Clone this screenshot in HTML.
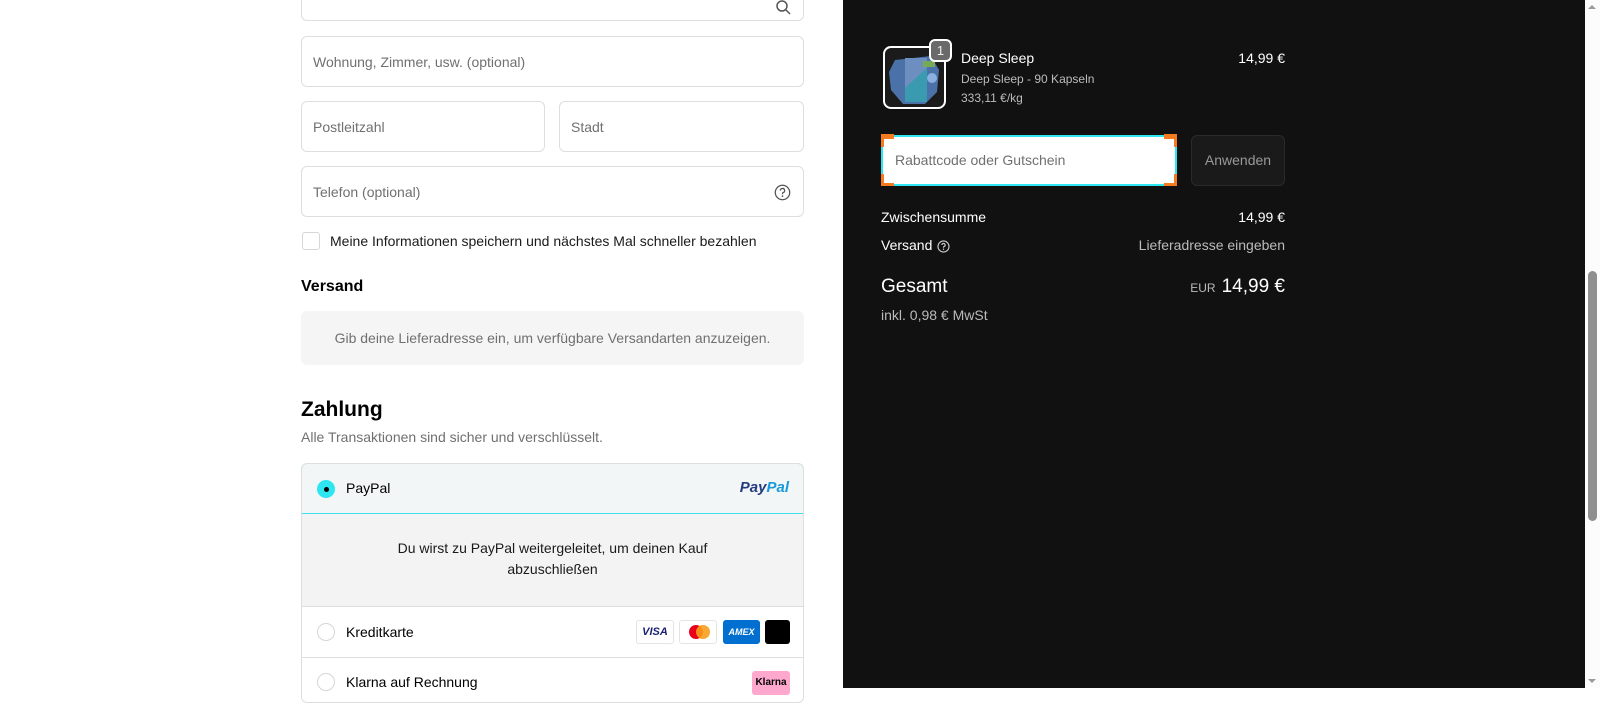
<!DOCTYPE html>
<html><head><meta charset="utf-8"><style>
*{box-sizing:border-box;margin:0;padding:0}
body{width:1600px;height:688px;overflow:hidden;position:relative;background:#fff;font-family:"Liberation Sans",sans-serif;font-size:14px;color:#000}
.a{position:absolute}
.f{position:absolute;border:1px solid #dedede;border-radius:6px;background:#fff;color:#707070;padding-left:11px;display:flex;align-items:center;font-size:14px;overflow:hidden}
.dark{position:absolute;left:843px;top:0;width:742px;height:688px;background:#111;color:#fff}
</style></head><body>
<div class="f" style="left:301px;top:-34px;width:503px;height:55px;"><span style="position:relative;top:-3px">Adresse</span>
<svg class="a" style="right:12px;top:32px" width="16" height="16" viewBox="0 0 16 16"><circle cx="7" cy="7" r="5" fill="none" stroke="#555" stroke-width="1.5"/><path d="M11 11l4 4" stroke="#555" stroke-width="1.5"/></svg></div>
<div class="f" style="left:301px;top:36px;width:503px;height:51px;">Wohnung, Zimmer, usw. (optional)</div>
<div class="f" style="left:301px;top:101px;width:244px;height:51px;">Postleitzahl</div>
<div class="f" style="left:559px;top:101px;width:245px;height:51px;">Stadt</div>
<div class="f" style="left:301px;top:166px;width:503px;height:51px;">Telefon (optional)
<svg class="a" style="right:12px;top:17px" width="17" height="17" viewBox="0 0 16 16"><circle cx="8" cy="8" r="6.8" fill="none" stroke="#555" stroke-width="1.2"/><path d="M6 6.2a2 2 0 1 1 2.6 1.9c-.5.2-.6.5-.6 1v.5" fill="none" stroke="#555" stroke-width="1.2"/><circle cx="8" cy="11.4" r=".8" fill="#555"/></svg></div>
<div class="a" style="left:302px;top:232px;width:18px;height:18px;border:1px solid #d6d6d6;border-radius:3px"></div>
<div class="a" style="left:330px;top:233px;font-size:14px;color:#1a1a1a">Meine Informationen speichern und nächstes Mal schneller bezahlen</div>
<div class="a" style="left:301px;top:278px;font-size:16px;font-weight:bold">Versand</div>
<div class="a" style="left:301px;top:311px;width:503px;height:54px;background:#f5f5f5;border-radius:6px;color:#707070;font-size:14px;text-align:center;line-height:54px">Gib deine Lieferadresse ein, um verfügbare Versandarten anzuzeigen.</div>
<div class="a" style="left:301px;top:398px;font-size:21px;font-weight:bold">Zahlung</div>
<div class="a" style="left:301px;top:429px;font-size:14px;color:#707070">Alle Transaktionen sind sicher und verschlüsselt.</div>
<div class="a" style="left:301px;top:463px;width:503px;height:240px;border:1px solid #dedede;border-radius:6px;overflow:hidden">
 <div class="a" style="left:-1px;top:-1px;width:503px;height:51px;border:1px solid #3fdfef;border-radius:6px 6px 0 0;background:#f3f6f7"></div>
 <div class="a" style="left:15px;top:16px;width:18px;height:18px;border-radius:50%;background:#2ee6f2"></div>
 <div class="a" style="left:21.5px;top:22.5px;width:5px;height:5px;border-radius:50%;background:#000"></div>
 <div class="a" style="left:44px;top:16px;font-size:14px">PayPal</div>
 <div class="a" style="right:14px;top:15px;font-size:15px;font-weight:bold;font-style:italic;color:#253b80">Pay<span style="color:#179bd7">Pal</span></div>
 <div class="a" style="left:0;top:50px;width:501px;height:93px;background:#f3f3f3;border-bottom:1px solid #dedede;text-align:center;font-size:14px;line-height:21px;padding-top:24px;color:#1a1a1a">Du wirst zu PayPal weitergeleitet, um deinen Kauf<br>abzuschließen</div>
 <div class="a" style="left:15px;top:159px;width:18px;height:18px;border-radius:50%;border:1px solid #d6d6d6"></div>
 <div class="a" style="left:44px;top:160px;font-size:14px">Kreditkarte</div>
 <div class="a" style="left:334px;top:156px;width:38px;height:24px;border:1px solid #e4e4e4;border-radius:3px;text-align:center;font:italic bold 11px/22px 'Liberation Sans',sans-serif;color:#1a1f71">VISA</div>
 <div class="a" style="left:377px;top:156px;width:38px;height:24px;border:1px solid #e4e4e4;border-radius:3px"><div class="a" style="left:9px;top:4px;width:14px;height:14px;border-radius:50%;background:#eb001b"></div><div class="a" style="left:16px;top:4px;width:14px;height:14px;border-radius:50%;background:#f79e1b;opacity:.9"></div></div>
 <div class="a" style="left:421px;top:156px;width:37px;height:24px;background:#016fd0;border-radius:3px;text-align:center;font:italic bold 9px/24px 'Liberation Sans',sans-serif;color:#fff">AMEX</div>
 <div class="a" style="left:463px;top:156px;width:25px;height:24px;background:#000;border-radius:3px"></div>
 <div class="a" style="left:0;top:193px;width:501px;height:1px;background:#dedede"></div>
 <div class="a" style="left:15px;top:209px;width:18px;height:18px;border-radius:50%;border:1px solid #d6d6d6"></div>
 <div class="a" style="left:44px;top:210px;font-size:14px">Klarna auf Rechnung</div>
 <div class="a" style="left:450px;top:207px;width:38px;height:24px;background:#ffa8cd;border-radius:3px;font:bold 10px/24px 'Liberation Sans',sans-serif;text-align:center">Klarna</div>
</div>

<div class="dark">
 <div class="a" style="left:40px;top:46px;width:63px;height:63px;border:2px solid #fff;border-radius:8px;background:#1b1b1b;overflow:hidden">
  <svg width="59" height="59" viewBox="0 0 59 59"><polygon points="10,12 46,8 54,22 52,44 40,56 18,56 6,42 4,24" fill="#4a72a8"/><rect x="20" y="10" width="22" height="44" fill="#6c8fc0"/><path d="M20 40 L42 20 L42 54 L20 54Z" fill="#3a9ab0"/><circle cx="47" cy="30" r="5" fill="#8ab0e0"/><rect x="38" y="13" width="12" height="6" fill="#7a5"/></svg>
 </div>
 <div class="a" style="left:86px;top:39px;width:23px;height:23px;border:2px solid #fff;border-radius:6px;background:#6a6a6a;text-align:center;font-size:13px;line-height:19px;color:#eee">1</div>
 <div class="a" style="left:118px;top:50px;font-size:14px">Deep Sleep</div>
 <div class="a" style="left:118px;top:72px;font-size:12px;color:#bbb">Deep Sleep - 90 Kapseln</div>
 <div class="a" style="left:118px;top:91px;font-size:12px;color:#bbb">333,11 €/kg</div>
 <div class="a" style="right:300px;top:50px;font-size:14px">14,99 €</div>
 <div class="a" style="left:38px;top:135px;width:296px;height:51px;background:#fff;border:2px solid #2ee6f2;border-radius:6px;color:#707070;font-size:14px;line-height:47px;padding-left:12px">Rabattcode oder Gutschein</div>
 <div class="a" style="left:38px;top:134px;width:13px;height:5px;background:#f47b20"></div><div class="a" style="left:38px;top:134px;width:3px;height:13px;background:#f47b20"></div>
 <div class="a" style="left:321px;top:134px;width:13px;height:5px;background:#f47b20"></div><div class="a" style="left:331px;top:134px;width:3px;height:13px;background:#f47b20"></div>
 <div class="a" style="left:38px;top:183px;width:13px;height:3px;background:#f47b20"></div><div class="a" style="left:38px;top:174px;width:3px;height:12px;background:#f47b20"></div>
 <div class="a" style="left:321px;top:183px;width:13px;height:3px;background:#f47b20"></div><div class="a" style="left:331px;top:174px;width:3px;height:12px;background:#f47b20"></div>
 <div class="a" style="left:348px;top:135px;width:94px;height:51px;background:#1a1a1a;border:1px solid #2a2a2a;border-radius:6px;color:#999;font-size:14px;text-align:center;line-height:49px">Anwenden</div>
 <div class="a" style="left:38px;top:209px;font-size:14px">Zwischensumme</div>
 <div class="a" style="right:300px;top:209px;font-size:14px">14,99 €</div>
 <div class="a" style="left:38px;top:237px;font-size:14px">Versand</div>
 <svg class="a" style="left:94px;top:240px" width="13" height="13" viewBox="0 0 16 16"><circle cx="8" cy="8" r="6.8" fill="none" stroke="#ccc" stroke-width="1.4"/><path d="M6 6.2a2 2 0 1 1 2.6 1.9c-.5.2-.6.5-.6 1v.5" fill="none" stroke="#ccc" stroke-width="1.4"/><circle cx="8" cy="11.4" r=".9" fill="#ccc"/></svg>
 <div class="a" style="right:300px;top:237px;font-size:14px;color:#bbb">Lieferadresse eingeben</div>
 <div class="a" style="left:38px;top:276px;font-size:19px">Gesamt</div>
 <div class="a" style="right:300px;top:276px;font-size:19px"><span style="font-size:12px;color:#bbb;margin-right:6px">EUR</span>14,99 €</div>
 <div class="a" style="left:38px;top:307px;font-size:14px;color:#bbb">inkl. 0,98 € MwSt</div>
</div>
<div class="a" style="left:1585px;top:0;width:15px;height:688px;background:#fcfcfc"></div>
<div class="a" style="left:1588px;top:271px;width:9px;height:250px;background:#8f8f8f;border-radius:5px"></div>
<div class="a" style="left:1588px;top:5px;width:0;height:0;border-left:4.5px solid transparent;border-right:4.5px solid transparent;border-bottom:4px solid #999"></div>
<div class="a" style="left:1588px;top:679px;width:0;height:0;border-left:4.5px solid transparent;border-right:4.5px solid transparent;border-top:4px solid #999"></div>
</body></html>
